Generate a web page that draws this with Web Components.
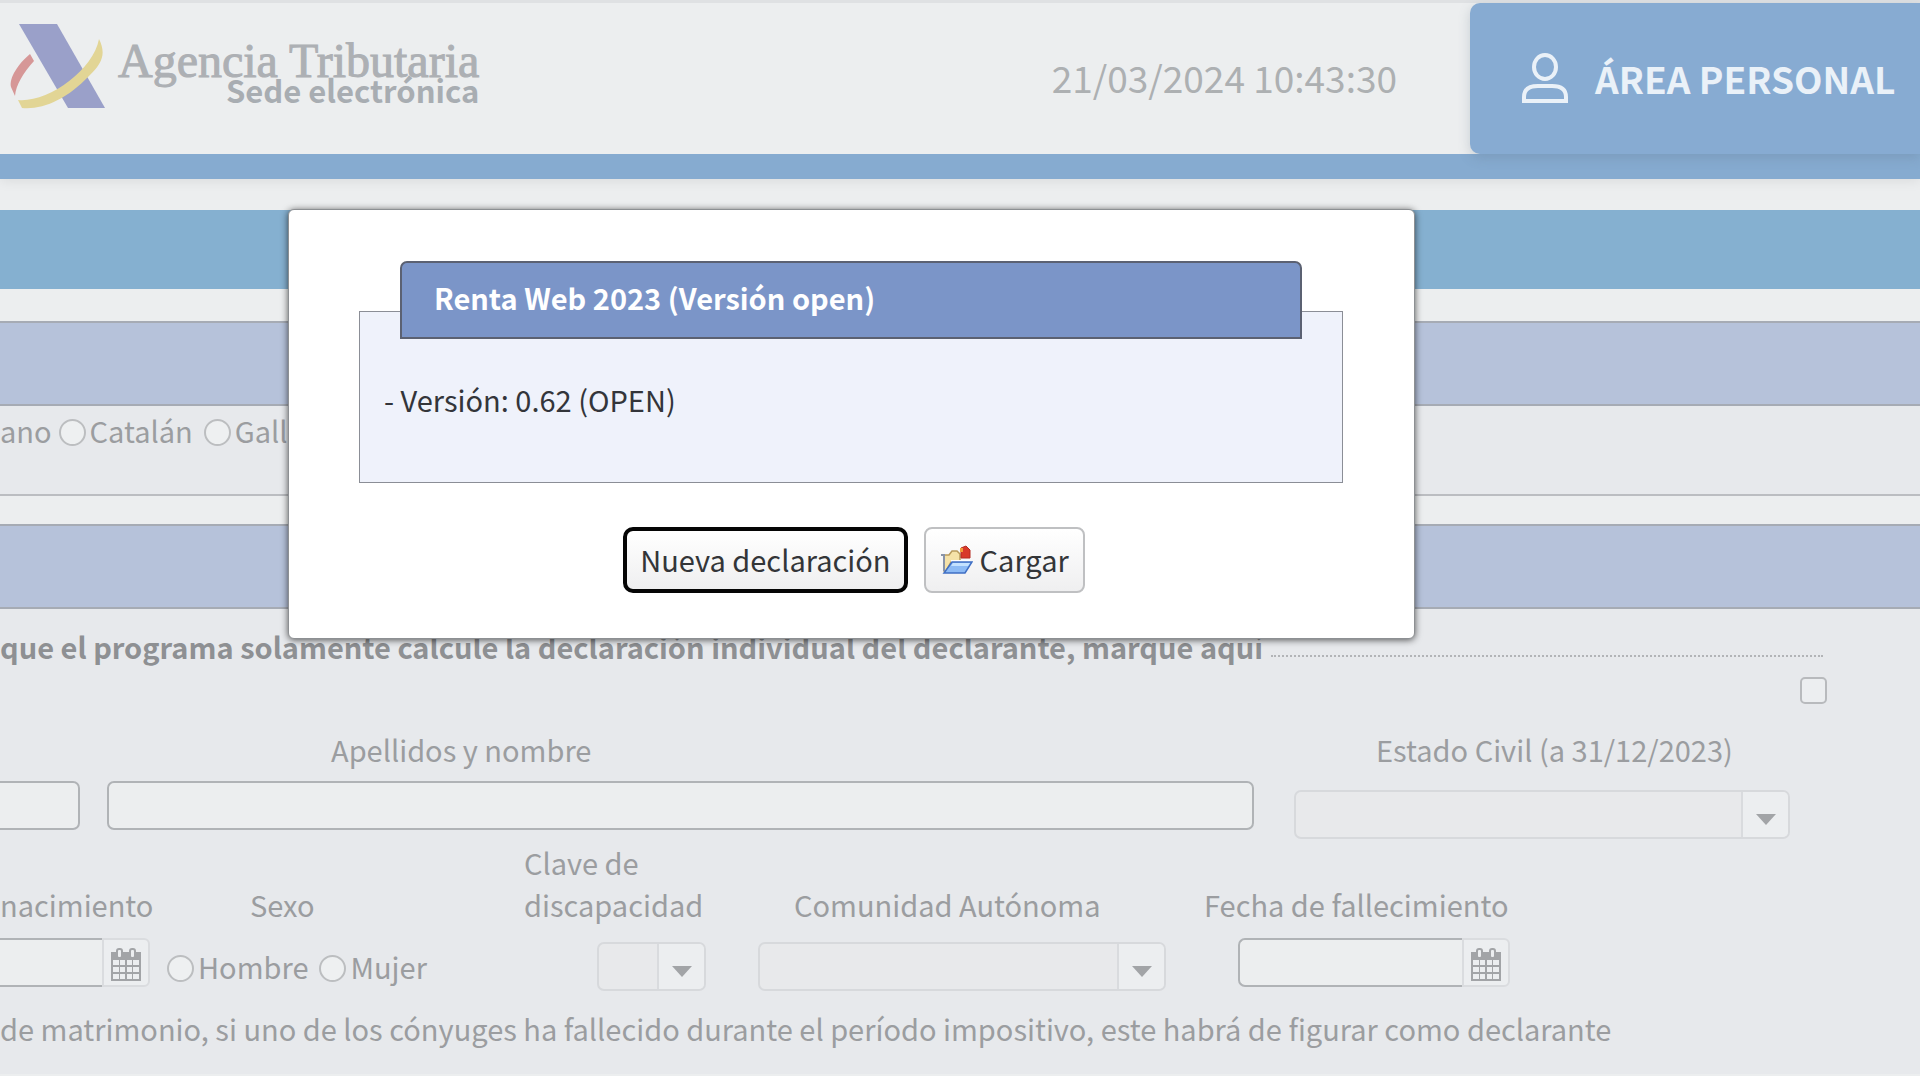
<!DOCTYPE html>
<html lang="es">
<head>
<meta charset="utf-8">
<title>Renta Web 2023</title>
<style>
  html, body { margin: 0; }
  body {
    min-height: 100vh;
    overflow-x: hidden;
    background: #eceeef;
    color: #9b9da0;
    font: 29px/42px "Noto Sans CJK SC", "Source Sans Pro", sans-serif;
  }
</style>
</head>
<body>
<renta-page></renta-page>
<script>
const define = (name, html, setup) => {
  const template = document.createElement('template');
  template.innerHTML = html;
  customElements.define(name, class extends HTMLElement {
    constructor() {
      super();
      this.attachShadow({ mode: 'open' }).append(template.content.cloneNode(true));
    }
    connectedCallback() { if (setup) setup(this, this.shadowRoot); }
  });
};

define('agency-logo', `
  <style>
    :host { display: flex; align-items: flex-start; gap: 12px; color: #adb0b4; }
    svg { display: block; width: 97px; height: 86px; }
    .names { display: flex; flex-direction: column; align-items: flex-end; padding-top: 16px; }
    .agency { font: 48px/44px "Liberation Serif", serif; -webkit-text-stroke: 1px #adb0b4; }
    .site { font-size: 31px; line-height: 14px; font-weight: 700; color: #a8adb2; }
  </style>
  <svg viewBox="0 0 97 86" aria-hidden="true">
    <path fill="#9aa0c9" d="M10 1H48L96 85H59Z"/>
    <path fill="#d69797" d="M21 31C9 41 0 55 2 64L6 73C7 62 14 50 25 38Z"/>
    <path fill="#e2d595" d="M9 77C38 80 84 48 90 16C97 30 94 40 80 53C58 76 34 87 13 85Z"/>
  </svg>
  <span class="names"><span class="agency">Agencia Tributaria</span><span class="site">Sede electrónica</span></span>
`);

define('site-header', `
  <style>
    :host { display: block; border-top: 3px solid #dfe1e3; border-bottom: 25px solid #86abd0; box-shadow: 0 2px 12px rgba(0,0,0,.08); }
    header { display: flex; align-items: stretch; height: 151px; }
    agency-logo { padding: 20px 0 0 9px; }
    time { margin-left: auto; margin-right: 73px; align-self: center; padding-bottom: 3px; font-size: 37px; line-height: 54px; color: #adb0b2; }
    a { box-sizing: border-box; width: 450px; padding: 0 0 2px 52px; display: flex; align-items: center; gap: 27px; border-radius: 10px 0 0 10px;
        background: #87abd2; color: #eaf1f8; font-size: 37px; line-height: 54px; font-weight: 700; text-decoration: none; white-space: nowrap;
        box-shadow: 0 4px 12px rgba(90,110,130,.25); }
    svg { display: block; width: 46px; height: 50px; flex: none; }
  </style>
  <header>
    <agency-logo></agency-logo>
    <time datetime="2024-03-21T10:43:30">21/03/2024 10:43:30</time>
    <a href="#"><svg viewBox="0 0 46 50" fill="none" stroke="#eaf1f8" stroke-width="4" aria-hidden="true"><ellipse cx="23" cy="14" rx="11" ry="12"/><path d="M2 48V44C2 36 8 33 16 33H30C38 33 44 36 44 44V48Z"/></svg><span>ÁREA PERSONAL</span></a>
  </header>
`);

define('form-section', `
  <style>
    :host { display: block; background: #e7e9ec; }
    .band { height: 81px; border: solid #a6abb4; border-width: 2px 0; background: #b6c2da; }
    .body { display: block; }
  </style>
  <div class="band"></div>
  <div class="body"><slot></slot></div>
`);

define('radio-group', `
  <style>
    :host { display: block; }
    fieldset { margin: 0; padding: 0; border: 0; display: flex; align-items: center; gap: 11px; }
    label { display: flex; align-items: center; gap: 4px; white-space: nowrap; }
    .before { margin-right: -4px; }
    input { appearance: none; box-sizing: border-box; width: 27px; height: 27px; margin: 4px 0 0; border: 2px solid #bcbec0; border-radius: 50%; background: #eef0f1; }
  </style>
  <fieldset></fieldset>
`, (host, root) => {
  const set = root.querySelector('fieldset');
  if (host.getAttribute('before')) {
    const text = document.createElement('span');
    text.className = 'before';
    text.textContent = host.getAttribute('before');
    set.append(text);
  }
  host.getAttribute('options').split(',').forEach(text => {
    const label = document.createElement('label');
    const input = document.createElement('input');
    input.type = 'radio';
    input.name = 'choice';
    label.append(input, text);
    set.append(label);
  });
});

const fieldStyle = `
  :host { display: flex; flex-direction: column; min-width: 0; }
  label { white-space: pre-line; padding-left: var(--label-inset, 0); min-height: 42px; }
  .control { display: grid; box-sizing: border-box; height: 49px; width: var(--control-width, auto); margin-left: var(--control-inset, 0); }
  input, select { appearance: none; box-sizing: border-box; width: 100%; height: 49px; margin: 0; padding: 0 8px; font: inherit; color: inherit;
    border: 2px solid #b0b3b6; border-radius: 7px; background: #eceeef; }
  :host([cut]) input { border-left: 0; border-radius: 0 7px 7px 0; }
`;
const nameField = (host, root) => {
  const label = root.querySelector('label');
  const text = host.getAttribute('label');
  if (text) label.textContent = text.replace('|', '\n');
  else root.querySelector('.field').setAttribute('aria-label', host.getAttribute('name'));
};

define('text-field', `
  <style>${fieldStyle} .control { margin-top: 11px; }</style>
  <label for="f"></label><div class="control"><input id="f" class="field" type="text"></div>
`, nameField);

define('select-field', `
  <style>${fieldStyle}
    .control { margin-top: var(--control-top, 17px); }
    select { grid-area: 1/1; border-color: #d7d9dc; background: #e8e9eb; }
    .arrow { grid-area: 1/1; justify-self: end; align-self: center; box-sizing: border-box; width: 47px; height: 45px; margin-right: 2px; border-left: 2px solid #d9dbde;
      border-radius: 0 5px 5px 0; background: #eceef0; display: grid; place-items: center; pointer-events: none; }
    .arrow svg { display: block; padding-top: 9px; }
  </style>
  <label for="f"></label>
  <div class="control"><select id="f" class="field"></select>
    <span class="arrow"><svg width="20" height="11" viewBox="0 0 20 11" aria-hidden="true"><path fill="#a2a4a7" d="M0 0H20L10 11Z"/></svg></span></div>
`, nameField);

define('date-field', `
  <style>${fieldStyle}
    .control { margin-top: 13px; grid-template-columns: 1fr 48px; }
    input { border-right: 0; border-radius: 7px 0 0 7px; }
    :host([cut]) input { border-radius: 0; }
    button { box-sizing: border-box; height: 49px; padding: 3px 0 0; border: 2px solid #dadcdf; border-radius: 0 6px 6px 0; background: #eceef0; display: grid; place-items: center; }
    svg { display: block; }
  </style>
  <label for="f"></label>
  <div class="control"><input id="f" class="field" type="text">
    <button type="button" aria-label="Calendario"><svg width="32" height="33" viewBox="0 0 32 33" aria-hidden="true">
      <path fill="#a2a4a7" d="M1 4H31V33H1Z"/>
      <path fill="#eceef0" d="M3 12H9V17H3ZM10 12H15V17H10ZM17 12H22V17H17ZM23 12H29V17H23ZM3 19H9V24H3ZM10 19H15V24H10ZM17 19H22V24H17ZM23 19H29V24H23ZM3 26H9V31H3ZM10 26H15V31H10ZM17 26H22V31H17ZM23 26H29V31H23Z"/>
      <rect x="7" y="1" width="5" height="9" rx="2" fill="#eceef0" stroke="#a2a4a7" stroke-width="2"/><rect x="20" y="1" width="5" height="9" rx="2" fill="#eceef0" stroke="#a2a4a7" stroke-width="2"/>
    </svg></button></div>
`, nameField);

define('version-dialog', `
  <style>
    :host { position: absolute; top: 209px; left: 15%; width: 59%; }
    dialog { position: static; display: block; box-sizing: border-box; width: auto; max-width: 1127px; margin: 0; padding: 51px 71px 45px 70px; border: 1px solid #8d9093;
      border-radius: 6px; background: #fff; color: #33353a; box-shadow: 0 1px 7px rgba(0,0,0,.65); }
    h1 { position: relative; box-sizing: border-box; margin: 0 41px -28px; height: 78px; padding: 13px 32px; border: 2px solid #5b6172; border-radius: 7px 7px 0 0;
      background: #7b95c8; color: #fff; font-size: 29px; line-height: 42px; font-weight: 700; }
    p { box-sizing: border-box; margin: 0; height: 172px; padding: 66px 24px 0; border: 1px solid #8b8e96; background: #eff2fb; }
    .actions { display: flex; justify-content: center; align-items: center; gap: 16px; padding: 44px 0 0 6px; }
    button { box-sizing: border-box; height: 66px; display: flex; align-items: center; gap: 7px; padding: 0 14px 3px; border: 2px solid #bfc0c2; border-radius: 8px;
      background: linear-gradient(#fff, #efeff0); color: #333538; font: inherit; white-space: nowrap; }
    button.main { border: 4px solid #050505; border-radius: 10px; padding: 0 13px 3px; }
    svg { display: block; padding-top: 3px; }
  </style>
  <dialog open aria-labelledby="t">
    <h1 id="t">Renta Web 2023 (Versión open)</h1>
    <p>- Versión: 0.62 (OPEN)</p>
    <div class="actions">
      <button type="button" class="main">Nueva declaración</button>
      <button type="button"><svg width="33" height="30" viewBox="0 0 33 30" aria-hidden="true">
        <path fill="#f5e2a8" stroke="#b89a5c" stroke-width="1.5" d="M4 10H9L12 6H17L20 9V17H11L6 26H4Z"/>
        <path fill="none" stroke="#8994a8" stroke-width="2" d="M1 10H4V26"/>
        <path fill="#d8392b" stroke="#b52c22" d="M21 3L26 1L30 5V13H21Z"/><path fill="#f29a3a" d="M20 3H23V7H20Z"/>
        <path fill="#fff" d="M11 15H30V17H11Z"/>
        <path fill="#8dbbf5" stroke="#3f6fc4" stroke-width="1.5" d="M12 17H32L25 28H4Z"/>
        <path fill="#c4e2ff" d="M13 18H30L28 21H11Z"/>
      </svg>Cargar</button>
    </div>
  </dialog>
`);

define('renta-page', `
  <style>
    :host { display: block; position: relative; min-height: 100vh; background: #eceeef; }
    .title { height: 79px; margin: 31px 0 32px; background: #85b0d0; }
    .language { padding: 3px 0 43px; }
    .first { border-bottom: 2px solid #bbbdc1; }
    .second { margin-top: 28px; padding-bottom: 25px; }
    .only { display: grid; grid-template-columns: auto 1fr; column-gap: 8px; padding: 16px 97px 0 0; }
    .only label { font-weight: 700; color: #8e9093; white-space: nowrap; }
    .dots { align-self: start; height: 30px; border-bottom: 2px dotted #b2b4b7; }
    .only input { grid-column: 2; justify-self: end; appearance: none; box-sizing: border-box; width: 27px; height: 27px; margin: 10px -4px 24px 0; border: 2px solid #b8babd; border-radius: 5px; background: #eceef0; }
    .row { display: grid; align-items: start; }
    .names { grid-template-columns: 80fr 1147fr 509fr; column-gap: 27px; padding-right: 130px; height: 113px; }
    .names select-field { --control-top: 20px; --label-inset: 82px; padding-left: 13px; }
    .names .full { --label-inset: 224px; }
    .data { grid-template-columns: 167fr 357fr 234fr 446fr 716fr; padding-bottom: 16px; }
    .birth { padding-top: 42px; --control-width: 150px; }
    .sex { padding-top: 42px; }
    .sex span { display: block; padding: 0 0 20px 83px; }
    .dis { --control-inset: 73px; --control-width: 109px; }
    .region { padding-top: 42px; --control-width: 408px; --label-inset: 36px; }
    .death { padding-top: 42px; --control-inset: 34px; --control-width: 272px; }
    p { margin: 0; white-space: nowrap; }
  </style>
  <site-header></site-header>
  <main>
    <div class="title"></div>
    <form-section class="first"><div class="language"><radio-group before="ano" options="Catalán,Gallego"></radio-group></div></form-section>
    <form-section class="second">
      <div class="only"><label for="only">que el programa solamente calcule la declaración individual del declarante, marque aquí</label><span class="dots"></span><input id="only" type="checkbox"></div>
      <div class="row names">
        <text-field cut name="NIF"></text-field>
        <text-field class="full" label="Apellidos y nombre"></text-field>
        <select-field label="Estado Civil (a 31/12/2023)"></select-field>
      </div>
      <div class="row data">
        <date-field class="birth" cut label="nacimiento"></date-field>
        <div class="sex"><span>Sexo</span><radio-group options="Hombre,Mujer"></radio-group></div>
        <select-field class="dis" label="Clave de|discapacidad"></select-field>
        <select-field class="region" label="Comunidad Autónoma"></select-field>
        <date-field class="death" label="Fecha de fallecimiento"></date-field>
      </div>
      <p>de matrimonio, si uno de los cónyuges ha fallecido durante el período impositivo, este habrá de figurar como declarante</p>
    </form-section>
  </main>
  <version-dialog></version-dialog>
`);
</script>
</body>
</html>
